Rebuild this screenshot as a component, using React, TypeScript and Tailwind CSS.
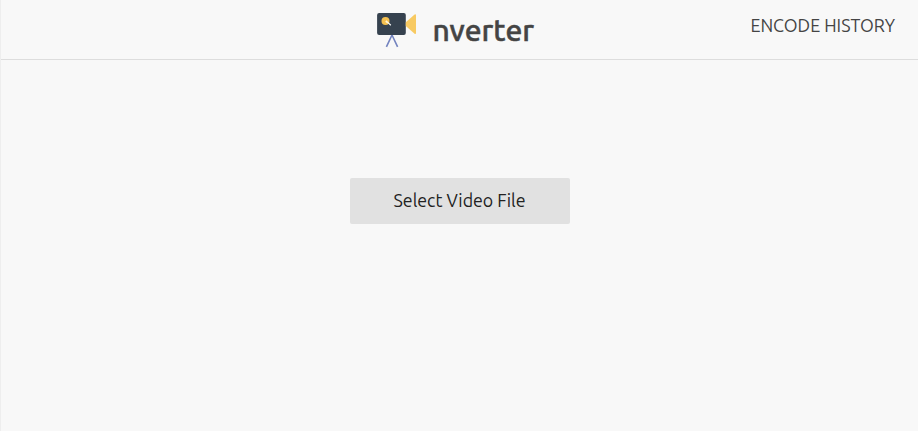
function Logo() {
  return (
    <svg className="block h-[35px] w-10" viewBox="0 0 40 35" aria-hidden="true">
      <path d="M15 22 9.4 33.8M15 22l5.6 11.8" fill="none" stroke="#7383bf" strokeWidth="1.6" />
      <rect x="0.1" y="0" width="28.7" height="22.1" rx="2" fill="#36424f" />
      <path d="M28.8 9.2 37.6 1.5Q39 .9 39 2.2V20Q39 21.3 37.6 20.7L28.8 13Z" fill="#f8ca62" />
      <circle cx="8.5" cy="8" r="4" fill="#f5c050" />
      <path d="m8.8 8 2.2 1.8" stroke="#fff4d9" strokeWidth="1.7" />
      <path d="m11 9.6 2.8 2.6" stroke="#fff" strokeWidth="1.2" />
    </svg>
  );
}

export default function App() {
  return (
    <div className="flex h-[431px] w-full flex-col overflow-hidden border-l border-[#eeeeee] bg-[#f8f8f8] font-['Ubuntu','Noto_Sans',sans-serif] text-[#444444]">
      <header className="grid h-[60px] shrink-0 grid-cols-[1fr_auto_1fr] border-b border-[#dddddd]">
        <h1 className="col-start-2 flex items-start pr-[6px]">
          <span className="mt-[13px]"><Logo /></span>
          <span className="mt-[10px] ml-4 w-[104px] text-[30px] leading-10 font-medium whitespace-nowrap [-webkit-text-stroke:0.5px_#444444]">nverter</span>
        </h1>
        <a className="mt-[13px] mr-[23px] justify-self-end text-[17.8px] leading-6 whitespace-nowrap">ENCODE HISTORY</a>
      </header>
      <main className="flex justify-center pt-[118px]">
        <button className="h-[46px] w-[220px] rounded-[2px] bg-[#e1e1e1] pb-0.5 text-[17.8px] leading-6 text-[#222222]">Select Video File</button>
      </main>
    </div>
  );
}
